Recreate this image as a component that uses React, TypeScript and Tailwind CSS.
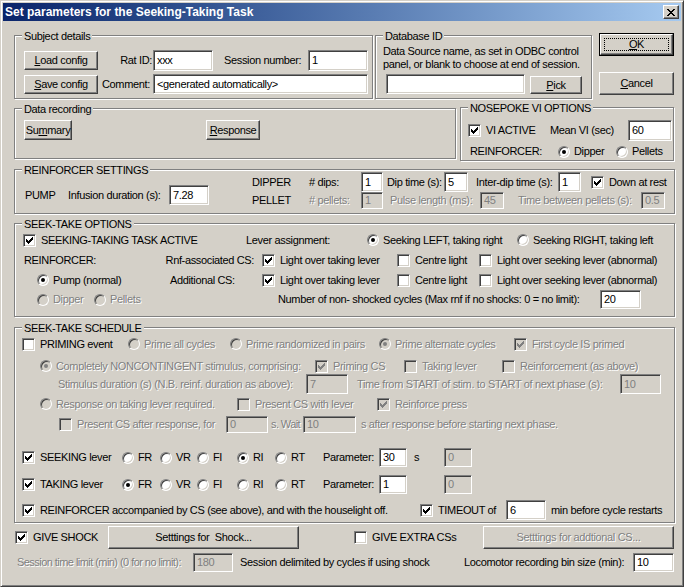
import React from 'react';

type Kids = { children?: React.ReactNode; className?: string; dis?: boolean };

const CHECK = 'M6 0h1v1h-1zM5 1h2v1h-2zM0 2h1v1h-1zM4 2h3v1h-3zM0 3h2v1h-2zM3 3h3v1h-3zM0 4h5v1h-5zM1 5h3v1h-3zM2 6h1v1h-1z';
const CROSS = 'M0 0h2v1h-2zM6 0h2v1h-2zM1 1h2v1h-2zM5 1h2v1h-2zM2 2h4v1h-4zM3 3h2v1h-2zM2 4h4v1h-4zM1 5h2v1h-2zM5 5h2v1h-2zM0 6h2v1h-2zM6 6h2v1h-2z';

const Lbl: React.FC<Kids> = ({ children, className = '', dis }) => (
  <span
    className={`shrink-0 whitespace-pre leading-[13px] ${
      dis ? 'text-[#808080] [text-shadow:1px_1px_0_#fff]' : 'text-black'
    } ${className}`}
  >
    {children}
  </span>
);

const Box = ({ checked, dis }: { checked?: boolean; dis?: boolean }) => (
  <span
    className={`shrink-0 w-[13px] h-[13px] flex items-center justify-center border border-t-[#808080] border-l-[#808080] border-r-white border-b-white shadow-[inset_1px_1px_0_#404040,inset_-1px_-1px_0_#d4d0c8] ${
      dis ? 'bg-[#d4d0c8]' : 'bg-white'
    }`}
  >
    {checked && (
      <svg width="7" height="7" viewBox="0 0 7 7" shapeRendering="crispEdges">
        <path d={CHECK} fill={dis ? '#808080' : '#000'} />
      </svg>
    )}
  </span>
);

const Dot = ({ checked, dis }: { checked?: boolean; dis?: boolean }) => (
  <span
    className={`shrink-0 w-[12px] h-[12px] rounded-full flex items-center justify-center border border-t-[#808080] border-l-[#808080] border-r-white border-b-white shadow-[inset_1px_1px_0_#404040,inset_-1px_-1px_0_#d4d0c8] ${
      dis ? 'bg-[#d4d0c8]' : 'bg-white'
    }`}
  >
    {checked && <span className={`w-[4px] h-[4px] rounded-full ${dis ? 'bg-[#808080]' : 'bg-black'}`} />}
  </span>
);

const Chk = ({ label, checked, dis, className = '' }: { label: string; checked?: boolean; dis?: boolean; className?: string }) => (
  <div className={`shrink-0 flex items-center ${className}`}>
    <Box checked={checked} dis={dis} />
    <Lbl dis={dis} className="ml-[5px]">{label}</Lbl>
  </div>
);

const Radio = ({ label, checked, dis, className = '' }: { label: string; checked?: boolean; dis?: boolean; className?: string }) => (
  <div className={`shrink-0 flex items-center ${className}`}>
    <Dot checked={checked} dis={dis} />
    <Lbl dis={dis} className="ml-[4px]">{label}</Lbl>
  </div>
);

const Txt = ({ v, dis, className = '' }: { v: string; dis?: boolean; className?: string }) => (
  <div
    className={`shrink-0 flex items-center pl-[3px] overflow-hidden whitespace-pre leading-[13px] border border-t-[#808080] border-l-[#808080] border-r-white border-b-white shadow-[inset_1px_1px_0_#404040,inset_-1px_-1px_0_#d4d0c8] ${
      dis ? 'bg-[#d4d0c8] text-[#808080]' : 'bg-white text-black'
    } ${className}`}
  >
    {v}
  </div>
);

const Btn: React.FC<Kids> = ({ children, className = '', dis }) => (
  <div
    className={`shrink-0 flex items-center justify-center whitespace-pre leading-[13px] border border-t-white border-l-white border-r-[#404040] border-b-[#404040] shadow-[inset_-1px_-1px_0_#808080] ${
      dis ? 'text-[#808080] [text-shadow:1px_1px_0_#fff]' : 'text-black'
    } ${className}`}
  >
    {children}
  </div>
);

const Group = ({ label, className = '', children }: { label: string; className?: string; children?: React.ReactNode }) => (
  <div className={`relative shrink-0 border border-[#808080] shadow-[inset_1px_1px_0_#fff,1px_1px_0_#fff] ${className}`}>
    <span className="absolute left-[7px] top-[-6px] px-[2px] bg-[#d4d0c8] leading-[13px] whitespace-pre">{label}</span>
    {children}
  </div>
);

const LeverRow = ({ name, sel, param, unit, className = '' }: { name: string; sel: string; param: string; unit: string; className?: string }) => (
  <div className={`flex items-center h-[19px] ${className}`}>
    <Chk className="ml-[7px] w-[100px]" checked label={name} />
    <Radio className="w-[38px]" label="FR" checked={sel === 'FR'} />
    <Radio className="w-[37px]" label="VR" checked={sel === 'VR'} />
    <Radio className="w-[40px]" label="FI" checked={sel === 'FI'} />
    <Radio className="w-[38px]" label="RI" checked={sel === 'RI'} />
    <Radio className="w-[48px]" label="RT" checked={sel === 'RT'} />
    <Lbl className="w-[56px]">Parameter:</Lbl>
    <Txt className="w-[28px] h-[19px]" v={param} />
    <Lbl className="w-[37px] pl-[7px]">{unit}</Lbl>
    <Txt className="w-[28px] h-[19px]" v="0" dis />
  </div>
);

export default function App() {
  return (
    <div className="w-[684px] h-[587px] overflow-hidden bg-[#d4d0c8] border border-t-[#d4d0c8] border-l-[#d4d0c8] border-r-[#404040] border-b-[#404040] shadow-[inset_1px_1px_0_#fff,inset_-1px_-1px_0_#808080] p-[2px] text-[11px] tracking-[-0.35px] text-black font-['Liberation_Sans',Arial,sans-serif]">
      {/* title bar */}
      <div className="h-[18px] flex items-center justify-between px-[2px] bg-linear-to-r from-[#0a246a] to-[#a6caf0]">
        <span className="text-white font-bold text-[12px] tracking-[0px] leading-[14px] whitespace-pre">Set parameters for the Seeking-Taking Task</span>
        <Btn className="w-[16px] h-[14px] bg-[#d4d0c8]">
          <svg width="8" height="7" viewBox="0 0 8 7" shapeRendering="crispEdges">
            <path d={CROSS} fill="#000" />
          </svg>
        </Btn>
      </div>

      {/* subject / database / ok-cancel */}
      <div className="flex items-start mt-[12px]">
        <Group label="Subject details" className="ml-[11px] mt-[2px] w-[359px] h-[64px] pt-[14px]">
          <div className="flex items-center h-[21px]">
            <Btn className="ml-[9px] w-[74px] h-[19px]"><span><u>L</u>oad config</span></Btn>
            <Lbl className="w-[55px] text-right pr-[1px]">Rat ID:</Lbl>
            <Txt className="w-[60px] h-[21px]" v="xxx" />
            <Lbl className="w-[95px] pl-[11px]">Session number:</Lbl>
            <Txt className="w-[60px] h-[21px]" v="1" />
          </div>
          <div className="flex items-center h-[20px] mt-[3px]">
            <Btn className="ml-[9px] w-[74px] h-[19px]"><span><u>S</u>ave config</span></Btn>
            <Lbl className="w-[55px] pl-[4px]">Comment:</Lbl>
            <Txt className="w-[215px] h-[20px]" v="<generated automatically>" />
          </div>
        </Group>

        <Group label="Database ID" className="ml-[2px] mt-[2px] w-[217px] h-[64px] pt-[9px] pl-[7px]">
          <div className="leading-[13px] whitespace-pre">
            <div>Data Source name, as set in ODBC control</div>
            <div>panel, or blank to choose at end of session.</div>
          </div>
          <div className="flex items-end mt-[3px]">
            <Txt className="ml-[3px] w-[139px] h-[20px]" v="" />
            <Btn className="ml-[5px] w-[52px] h-[18px]"><span><u>P</u>ick</span></Btn>
          </div>
        </Group>

        <div className="ml-[7px] flex flex-col">
          <div className="w-[75px] h-[23px] border border-black flex">
            <Btn className="relative w-full h-full">
              <span className="absolute inset-[3px] border border-dotted border-black" />
              <span><u>O</u>K</span>
            </Btn>
          </div>
          <Btn className="mt-[16px] w-[75px] h-[23px]"><span><u>C</u>ancel</span></Btn>
        </div>
      </div>

      {/* data recording / nosepoke */}
      <div className="flex items-start mt-[8px]">
        <Group label="Data recording" className="ml-[11px] mt-[1px] w-[442px] h-[51px] pt-[11px]">
          <div className="flex">
            <Btn className="ml-[9px] w-[48px] h-[20px]"><span>Su<u>m</u>mary</span></Btn>
            <Btn className="ml-[134px] w-[54px] h-[20px]"><span><u>R</u>esponse</span></Btn>
          </div>
        </Group>
        <Group label="NOSEPOKE VI OPTIONS" className="ml-[4px] w-[214px] h-[54px] pt-[12px]">
          <div className="flex items-center h-[21px]">
            <Chk className="ml-[7px] w-[82px]" checked label="VI ACTIVE" />
            <Lbl className="w-[78px]">Mean VI (sec)</Lbl>
            <Txt className="w-[44px] h-[21px]" v="60" />
          </div>
          <div className="flex items-center h-[13px] mt-[4px]">
            <Lbl className="ml-[9px] w-[88px]">REINFORCER:</Lbl>
            <Radio className="w-[58px]" checked label="Dipper" />
            <Radio label="Pellets" />
          </div>
        </Group>
      </div>

      {/* reinforcer settings */}
      <Group label="REINFORCER SETTINGS" className="ml-[11px] mt-[8px] w-[661px] h-[45px] flex">
        <div className="flex items-center w-[237px] h-[20px] mt-[15px]">
          <Lbl className="ml-[10px] w-[43px]">PUMP</Lbl>
          <Lbl className="w-[101px]">Infusion duration (s):</Lbl>
          <Txt className="w-[40px] h-[20px]" v="7.28" />
        </div>
        <div className="flex flex-col mt-[2px]">
          <div className="flex items-center h-[20px]">
            <Lbl className="w-[57px]">DIPPER</Lbl>
            <Lbl className="w-[52px]"># dips:</Lbl>
            <Txt className="w-[22px] h-[20px]" v="1" />
            <Lbl className="w-[61px] pl-[4px]">Dip time (s):</Lbl>
            <Txt className="w-[24px] h-[20px]" v="5" />
            <Lbl className="w-[90px] pl-[8px]">Inter-dip time (s):</Lbl>
            <Txt className="w-[23px] h-[20px]" v="1" />
            <Chk className="ml-[10px]" checked label="Down at rest" />
          </div>
          <div className="flex items-center h-[17px]">
            <Lbl className="w-[57px]">PELLET</Lbl>
            <Lbl dis className="w-[52px]"># pellets:</Lbl>
            <Txt dis className="w-[22px] h-[17px]" v="1" />
            <Lbl dis className="w-[97px] pl-[7px]">Pulse length (ms):</Lbl>
            <Txt dis className="w-[24px] h-[17px]" v="45" />
            <Lbl dis className="w-[137px] pl-[14px]">Time between pellets (s):</Lbl>
            <Txt dis className="w-[24px] h-[17px]" v="0.5" />
          </div>
        </div>
      </Group>

      {/* seek-take options */}
      <Group label="SEEK-TAKE OPTIONS" className="ml-[11px] mt-[9px] w-[661px] h-[94px] pt-[8px]">
        <div className="flex items-center h-[16px]">
          <Chk className="ml-[8px] w-[223px]" checked label="SEEKING-TAKING TASK ACTIVE" />
          <Lbl className="w-[121px]">Lever assignment:</Lbl>
          <Radio className="w-[150px]" checked label="Seeking LEFT, taking right" />
          <Radio label="Seeking RIGHT, taking left" />
        </div>
        <div className="flex items-center h-[16px] mt-[4px]">
          <Lbl className="ml-[9px] w-[130px]">REINFORCER:</Lbl>
          <Lbl className="w-[108px] text-right pr-[8px]">Rnf-associated CS:</Lbl>
          <Chk className="w-[135px]" checked label="Light over taking lever" />
          <Chk className="w-[82px]" label="Centre light" />
          <Chk label="Light over seeking lever (abnormal)" />
        </div>
        <div className="flex items-center h-[16px] mt-[4px]">
          <Radio className="ml-[22px] w-[133px]" checked label="Pump (normal)" />
          <Lbl className="w-[92px]">Additional CS:</Lbl>
          <Chk className="w-[135px]" checked label="Light over taking lever" />
          <Chk className="w-[82px]" label="Centre light" />
          <Chk label="Light over seeking lever (abnormal)" />
        </div>
        <div className="flex items-center h-[19px] mt-[2px]">
          <Radio dis className="ml-[22px] w-[57px]" label="Dipper" />
          <Radio dis className="w-[184px]" label="Pellets" />
          <Lbl className="w-[322px]">Number of non- shocked cycles (Max rnf if no shocks: 0 = no limit):</Lbl>
          <Txt className="w-[41px] h-[19px]" v="20" />
        </div>
      </Group>

      {/* seek-take schedule */}
      <Group label="SEEK-TAKE SCHEDULE" className="ml-[11px] mt-[10px] w-[661px] h-[196px] pt-[8px]">
        <div className="flex items-center h-[16px]">
          <Chk className="ml-[7px] w-[106px]" label="PRIMING event" />
          <Radio dis className="w-[102px]" label="Prime all cycles" />
          <Radio dis className="w-[149px]" label="Prime randomized in pairs" />
          <Radio dis checked className="w-[135px]" label="Prime alternate cycles" />
          <Chk dis checked label="First cycle IS primed" />
        </div>
        <div className="flex items-center h-[16px] mt-[6px]">
          <Radio dis checked className="ml-[25px] w-[275px]" label="Completely NONCONTINGENT stimulus, comprising:" />
          <Chk dis checked className="w-[89px]" label="Priming CS" />
          <Chk dis className="w-[98px]" label="Taking lever" />
          <Chk dis label="Reinforcement (as above)" />
        </div>
        <div className="flex items-center h-[20px]">
          <Lbl dis className="ml-[43px] w-[248px]">Stimulus duration (s) (N.B. reinf. duration as above):</Lbl>
          <Txt dis className="w-[42px] h-[20px]" v="7" />
          <Lbl dis className="w-[272px] pl-[9px]">Time from START of stim. to START of next phase (s):</Lbl>
          <Txt dis className="w-[41px] h-[20px]" v="10" />
        </div>
        <div className="flex items-center h-[16px] mt-[2px]">
          <Radio dis className="ml-[25px] w-[197px]" label="Response on taking lever required." />
          <Chk dis className="w-[140px]" label="Present CS with lever" />
          <Chk dis checked label="Reinforce press" />
        </div>
        <div className="flex items-center h-[18px] mt-[3px]">
          <Chk dis className="ml-[44px] w-[167px]" label="Present CS after response, for" />
          <Txt dis className="w-[42px] h-[17px]" v="0" />
          <Lbl dis className="w-[35px] pl-[3px] tracking-[-0.6px]">s. Wait</Lbl>
          <Txt dis className="w-[53px] h-[17px]" v="10" />
          <Lbl dis className="pl-[5px]">s after response before starting next phase.</Lbl>
        </div>
        <LeverRow className="mt-[15px]" name="SEEKING lever" sel="RI" param="30" unit="s" />
        <LeverRow className="mt-[8px]" name="TAKING lever" sel="FR" param="1" unit="" />
        <div className="flex items-center h-[20px] mt-[6px]">
          <Chk className="ml-[7px] w-[398px]" checked label="REINFORCER accompanied by CS (see above), and with the houselight off." />
          <Chk className="w-[86px]" checked label="TIMEOUT of" />
          <Txt className="w-[40px] h-[20px]" v="6" />
          <Lbl className="pl-[5px]">min before cycle restarts</Lbl>
        </div>
      </Group>

      {/* shock / extra CS */}
      <div className="flex items-center h-[23px] mt-[3px]">
        <Chk className="ml-[12px] w-[93px]" checked label="GIVE SHOCK" />
        <Btn className="w-[191px] h-[23px]">Setttings for  Shock...</Btn>
        <Chk className="ml-[55px] w-[129px]" label="GIVE EXTRA CSs" />
        <Btn dis className="w-[191px] h-[23px]">Setttings for addtional CS...</Btn>
      </div>

      <div className="flex items-center h-[19px] mt-[4px]">
        <Lbl dis className="ml-[14px] w-[176px] tracking-[-0.55px]">Session time limit (min) (0 for no limit):</Lbl>
        <Txt dis className="w-[40px] h-[19px]" v="180" />
        <Lbl className="w-[231px] pl-[7px]">Session delimited by cycles if using shock</Lbl>
        <Lbl className="w-[169px]">Locomotor recording bin size (min):</Lbl>
        <Txt className="w-[41px] h-[19px]" v="10" />
      </div>
    </div>
  );
}
